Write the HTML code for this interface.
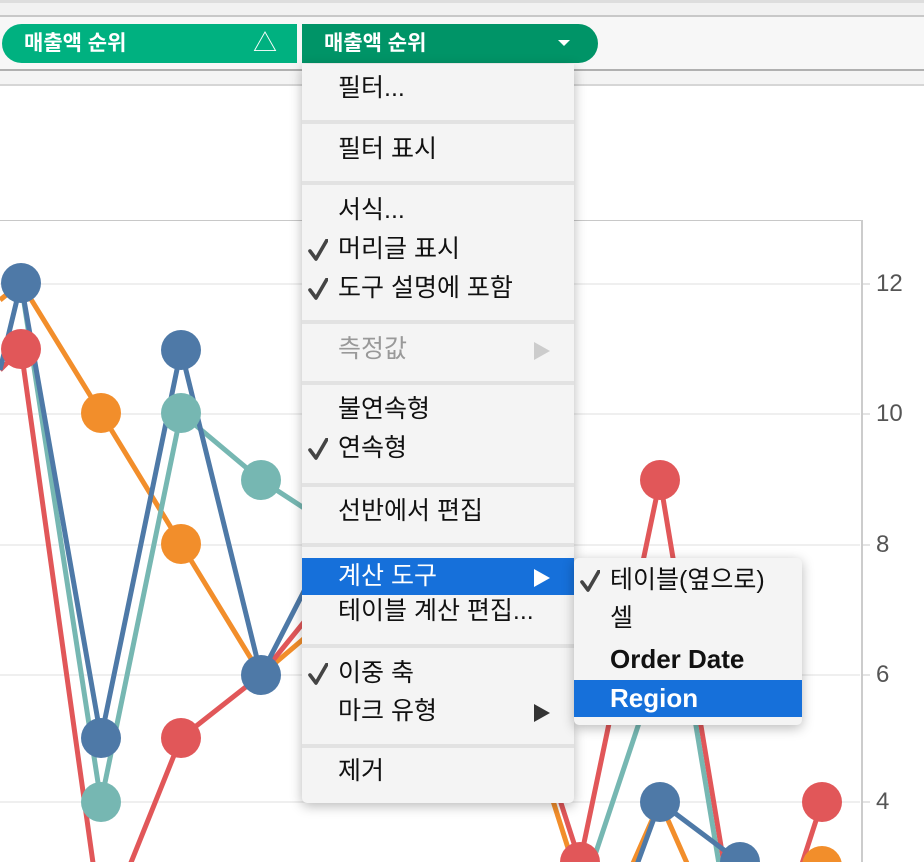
<!DOCTYPE html>
<html><head><meta charset="utf-8"><style>
body{margin:0;width:924px;height:862px;overflow:hidden;background:#fff;font-family:"Liberation Sans","Noto Sans CJK KR",sans-serif;position:relative}
.abs{position:absolute}
.pill{position:absolute;top:24px;height:39px;color:#fff;font-weight:bold;font-size:21px;line-height:39px;box-sizing:border-box}
.menu{position:absolute;background:#f4f4f4;box-shadow:0 3px 12px rgba(0,0,0,.28);border-radius:0 0 5px 5px}
.it{position:absolute;left:0;right:0;font-size:25px;color:#111;line-height:37px;height:37px;padding-left:36px;white-space:nowrap}
.sep{position:absolute;left:0;right:0;height:4px;background:#e2e2e2}
.ck{position:absolute;left:6px;top:8px;width:20px;height:22px}
.ar{position:absolute;right:24px;top:11px;width:0;height:0;border-left:16px solid #333;border-top:9px solid transparent;border-bottom:9px solid transparent}
.hl{background:#1670da;color:#fff}
.ax{position:absolute;left:876px;font-size:24px;color:#555}
</style></head><body>
<div class="abs" style="left:0;top:0;width:924px;height:17px;background:#f1f1f1;border-top:3px solid #ddd;border-bottom:2px solid #c8c8c8;box-sizing:border-box"></div>
<div class="abs" style="left:0;top:17px;width:924px;height:53px;background:#f7f7f7"></div>
<div class="abs" style="left:0;top:69px;width:924px;height:2px;background:#b0b0b0"></div>
<div class="abs" style="left:0;top:71px;width:924px;height:13px;background:#f4f4f4;border-bottom:2px solid #d6d6d6"></div>
<div class="abs" style="left:0;top:220px;width:862px;height:1px;background:#c8c8c8"></div>
<div class="abs" style="left:861px;top:220px;width:2px;height:642px;background:#ccc"></div>

<svg class="abs" style="left:0;top:0" width="924" height="862">
<g stroke="#efefef" stroke-width="2">
<line x1="0" y1="284" x2="860" y2="284"/><line x1="0" y1="414" x2="860" y2="414"/><line x1="0" y1="545" x2="860" y2="545"/><line x1="0" y1="675" x2="860" y2="675"/><line x1="0" y1="802" x2="860" y2="802"/>
</g>
<g stroke="#c8c8c8" stroke-width="1"><line x1="862" y1="284" x2="870" y2="284"/><line x1="862" y1="414" x2="870" y2="414"/><line x1="862" y1="545" x2="870" y2="545"/><line x1="862" y1="675" x2="870" y2="675"/><line x1="862" y1="802" x2="870" y2="802"/></g>
<g fill="none" stroke-width="5" stroke-linejoin="round">
<polyline stroke="#f28e2b" points="0,300 21,283 101,413 181,544 261,675 320,625"/>
<polyline stroke="#76b7b2" points="21,283 101,802 181,413 261,480 330,525"/>
<polyline stroke="#e15759" points="0,370 21,349 94,870"/>
<polyline stroke="#e15759" points="128,870 181,738 261,675 330,590"/>
<polyline stroke="#4e79a7" points="0,370 21,283 101,738 181,350 261,675 320,560"/>
<polyline stroke="#e15759" points="560,800 580,862 660,480 725,870"/>
<polyline stroke="#76b7b2" points="590,870 640,720"/><polyline stroke="#76b7b2" points="695,720 720,870"/>
<polyline stroke="#f28e2b" points="540,760 575,870"/>
<polyline stroke="#f28e2b" points="630,870 660,802 690,870"/>
<polyline stroke="#4e79a7" points="635,870 660,802 740,862"/>
<polyline stroke="#e15759" points="800,870 822,802"/>
</g>
<g>
<circle cx="101" cy="413" r="20" fill="#f28e2b"/><circle cx="181" cy="544" r="20" fill="#f28e2b"/>
<circle cx="101" cy="802" r="20" fill="#76b7b2"/><circle cx="181" cy="413" r="20" fill="#76b7b2"/><circle cx="261" cy="480" r="20" fill="#76b7b2"/>
<circle cx="21" cy="283" r="20" fill="#4e79a7"/><circle cx="21" cy="349" r="20" fill="#e15759"/>
<circle cx="181" cy="738" r="20" fill="#e15759"/>
<circle cx="101" cy="738" r="20" fill="#4e79a7"/><circle cx="181" cy="350" r="20" fill="#4e79a7"/><circle cx="261" cy="675" r="20" fill="#4e79a7"/>
<circle cx="660" cy="480" r="20" fill="#e15759"/><circle cx="580" cy="862" r="20" fill="#e15759"/>
<circle cx="660" cy="802" r="20" fill="#4e79a7"/><circle cx="740" cy="862" r="20" fill="#4e79a7"/>
<circle cx="822" cy="802" r="20" fill="#e15759"/><circle cx="822" cy="866" r="20" fill="#f28e2b"/>
</g>
</svg>
<div class="ax" style="top:270px">12</div><div class="ax" style="top:400px">10</div><div class="ax" style="top:531px">8</div><div class="ax" style="top:661px">6</div><div class="ax" style="top:788px">4</div>

<div class="pill" style="left:2px;width:295px;background:#00b180;border-radius:20px 0 0 20px;padding-left:22px">매출액 순위<span style="position:absolute;left:251px;font-size:24px;font-weight:normal">△</span></div>
<div class="pill" style="left:302px;width:296px;background:#009467;border-radius:0 20px 20px 0;padding-left:22px">매출액 순위<span style="position:absolute;left:256px;top:16px;width:0;height:0;border-left:6px solid transparent;border-right:6px solid transparent;border-top:6px solid #fff"></span></div>

<svg width="0" height="0" style="position:absolute"><defs><symbol id="c" viewBox="0 0 20 22"><path d="M2,12 L8,20 L19,1" fill="none" stroke="#444" stroke-width="3.6" stroke-linecap="round" stroke-linejoin="round"/></symbol></defs></svg>

<div class="menu" style="left:302px;top:64px;width:272px;height:739px">
<div class="it" style="top:6px">필터...</div>
<div class="sep" style="top:56px"></div>
<div class="it" style="top:67px">필터 표시</div>
<div class="sep" style="top:117px"></div>
<div class="it" style="top:128px">서식...</div>
<div class="it" style="top:167px"><svg class="ck"><use href="#c"/></svg>머리글 표시</div>
<div class="it" style="top:206px"><svg class="ck"><use href="#c"/></svg>도구 설명에 포함</div>
<div class="sep" style="top:256px"></div>
<div class="it" style="top:267px;color:#999">측정값<span class="ar" style="border-left-color:#ccc"></span></div>
<div class="sep" style="top:317px"></div>
<div class="it" style="top:327px">불연속형</div>
<div class="it" style="top:366px"><svg class="ck"><use href="#c"/></svg>연속형</div>
<div class="sep" style="top:419px"></div>
<div class="it" style="top:429px">선반에서 편집</div>
<div class="sep" style="top:479px"></div>
<div class="it hl" style="top:494px">계산 도구<span class="ar" style="border-left-color:#fff"></span></div>
<div class="it" style="top:529px">테이블 계산 편집...</div>
<div class="sep" style="top:580px"></div>
<div class="it" style="top:591px"><svg class="ck"><use href="#c"/></svg>이중 축</div>
<div class="it" style="top:629px">마크 유형<span class="ar"></span></div>
<div class="sep" style="top:680px"></div>
<div class="it" style="top:689px">제거</div>
</div>

<div class="menu" style="left:574px;top:558px;width:228px;height:167px;border-radius:5px">
<div class="it" style="top:4px"><svg class="ck"><use href="#c"/></svg>테이블(옆으로)</div>
<div class="it" style="top:42px">셀</div>
<div class="it" style="top:83px;font-weight:600;font-size:26px">Order Date</div>
<div class="it hl" style="top:122px;font-weight:600;font-size:26px">Region</div>
</div>
</body></html>
